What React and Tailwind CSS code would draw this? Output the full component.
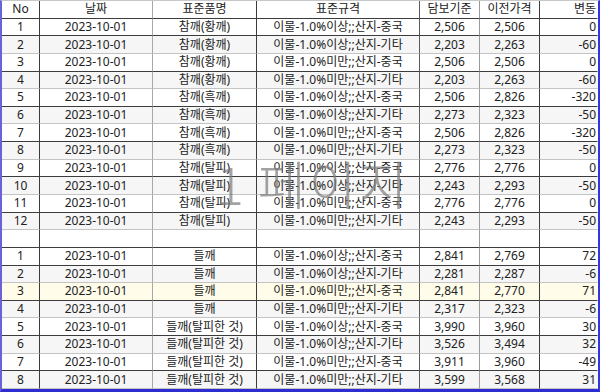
import React from "react";

const sec1 = [
  ["1", "참깨(황깨)", "이물-1.0%이상;;산지-중국", "2,506", "2,506", "0"],
  ["2", "참깨(황깨)", "이물-1.0%이상;;산지-기타", "2,203", "2,263", "-60"],
  ["3", "참깨(황깨)", "이물-1.0%미만;;산지-중국", "2,506", "2,506", "0"],
  ["4", "참깨(황깨)", "이물-1.0%미만;;산지-기타", "2,203", "2,263", "-60"],
  ["5", "참깨(흑깨)", "이물-1.0%이상;;산지-중국", "2,506", "2,826", "-320"],
  ["6", "참깨(흑깨)", "이물-1.0%이상;;산지-기타", "2,273", "2,323", "-50"],
  ["7", "참깨(흑깨)", "이물-1.0%미만;;산지-중국", "2,506", "2,826", "-320"],
  ["8", "참깨(흑깨)", "이물-1.0%미만;;산지-기타", "2,273", "2,323", "-50"],
  ["9", "참깨(탈피)", "이물-1.0%이상;;산지-중국", "2,776", "2,776", "0"],
  ["10", "참깨(탈피)", "이물-1.0%이상;;산지-기타", "2,243", "2,293", "-50"],
  ["11", "참깨(탈피)", "이물-1.0%미만;;산지-중국", "2,776", "2,776", "0"],
  ["12", "참깨(탈피)", "이물-1.0%미만;;산지-기타", "2,243", "2,293", "-50"],
];
const sec2 = [
  ["1", "들깨", "이물-1.0%이상;;산지-중국", "2,841", "2,769", "72"],
  ["2", "들깨", "이물-1.0%이상;;산지-기타", "2,281", "2,287", "-6"],
  ["3", "들깨", "이물-1.0%미만;;산지-중국", "2,841", "2,770", "71"],
  ["4", "들깨", "이물-1.0%미만;;산지-기타", "2,317", "2,323", "-6"],
  ["5", "들깨(탈피한 것)", "이물-1.0%이상;;산지-중국", "3,990", "3,960", "30"],
  ["6", "들깨(탈피한 것)", "이물-1.0%이상;;산지-기타", "3,526", "3,494", "32"],
  ["7", "들깨(탈피한 것)", "이물-1.0%미만;;산지-중국", "3,911", "3,960", "-49"],
  ["8", "들깨(탈피한 것)", "이물-1.0%미만;;산지-기타", "3,599", "3,568", "31"],
];

const vcol = [
  "border-r-[#3c3c3c]",
  "border-r-[#a8a8a8]",
  "border-r-[#3c3c3c]",
  "border-r-[#5a5a5a]",
  "border-r-[#9a9a9a]",
  "border-r-[#3c3c3c]",
  "border-r-transparent",
];
const align = [
  "justify-center",
  "justify-center",
  "justify-center",
  "justify-center",
  "justify-center",
  "justify-center",
  "justify-end pr-[1px]",
];

function Row({ cells, dark, bg }) {
  return (
    <>
      {cells.map((c, i) => (
        <div
          key={i}
          className={`flex items-center ${align[i]} border-r border-b ${vcol[i]} ${
            dark ? "border-b-[#3c3c3c]" : "border-b-[#c4c4c4]"
          } ${bg} whitespace-nowrap overflow-hidden leading-none`}
        >
          {c}
        </div>
      ))}
    </>
  );
}

export default function App() {
  const rows = [];
  rows.push({ cells: ["No", "날짜", "표준품명", "표준규격", "담보기준", "이전가격", "변동"], dark: true, bg: "bg-white" });
  sec1.forEach((r, k) =>
    rows.push({
      cells: [r[0], "2023-10-01", ...r.slice(1)],
      dark: k % 2 === 0,
      bg: k % 2 === 1 ? "bg-[#f6f6f6]" : "bg-white",
    })
  );
  rows.push({ cells: ["", "", "", "", "", "", ""], dark: true, bg: "bg-white" });
  sec2.forEach((r, k) =>
    rows.push({
      cells: [r[0], "2023-10-01", ...r.slice(1)],
      dark: k % 2 === 0,
      bg: k === 2 ? "bg-[#fffdea]" : k % 2 === 1 ? "bg-[#f6f6f6]" : "bg-white",
    })
  );
  return (
    <div className="relative w-[600px] h-[392px] bg-white border-l-2 border-r-2 border-b-[3px] border-l-[#6a62d8] border-r-[#3535e0] border-b-[#2c2cd0] border-t border-t-[#c8c8c8] text-[12px] text-[#222] font-['Noto_Sans','Noto_Sans_CJK_KR',sans-serif]">
      <div className="grid h-full grid-cols-[38px_113px_104px_163px_60px_60px_1fr] grid-rows-[repeat(22,minmax(0,1fr))]">
        {rows.map((r, i) => (
          <Row key={i} {...r} />
        ))}
      </div>
      <div className="pointer-events-none absolute left-[214px] top-[156px] flex items-start gap-[14px] text-[52px] leading-none font-light text-[#7a7a7a]/70 font-['Noto_Sans_CJK_KR',sans-serif]">
        <span>1</span>
        <span className="tracking-[3px]">페이지</span>
      </div>
    </div>
  );
}
